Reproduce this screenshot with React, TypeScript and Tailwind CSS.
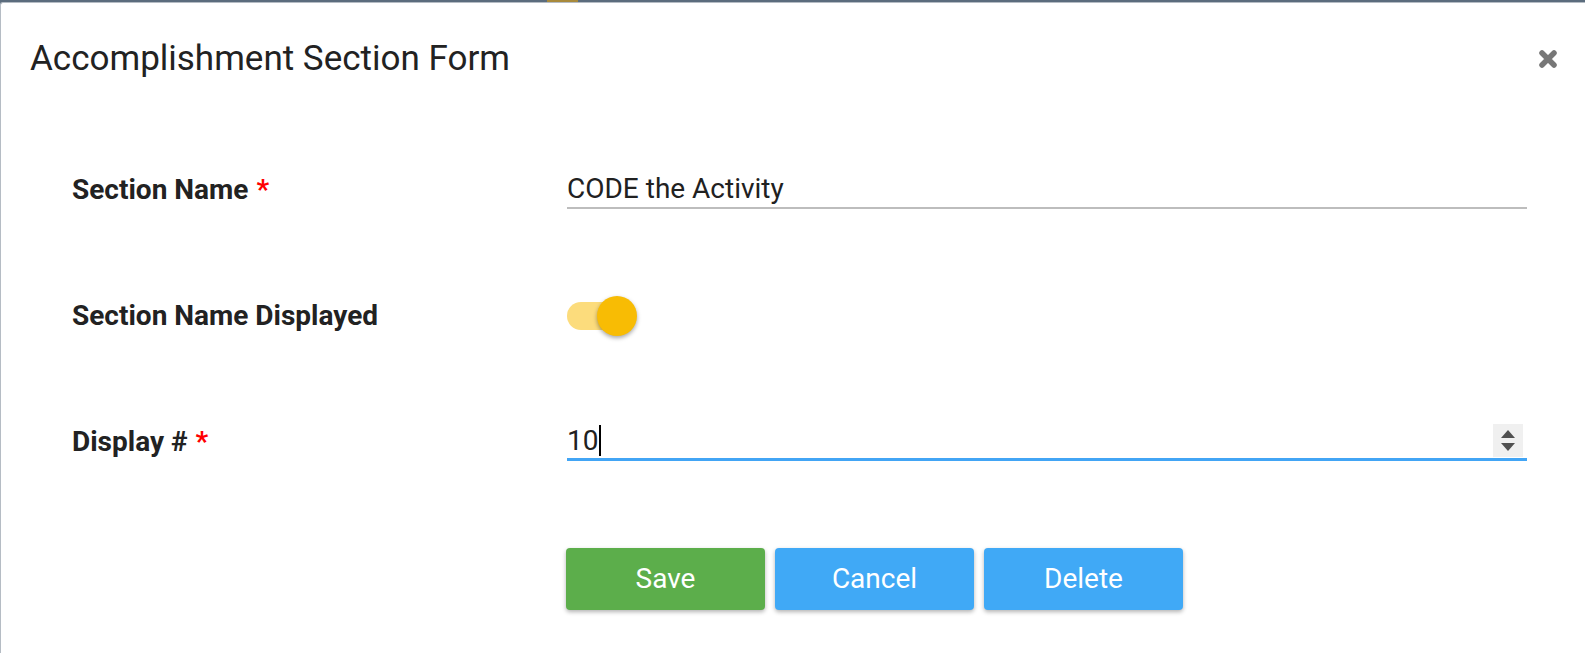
import React from 'react';

function CloseIcon() {
  return (
    <svg width="20" height="20" viewBox="0 0 20 20" aria-hidden="true">
      <path d="M4 4 L16 16 M16 4 L4 16" stroke="#777777" strokeWidth="5.5" strokeLinecap="round" />
    </svg>
  );
}

function Required() {
  return <span className="ml-[8px] text-[#ff0000]">*</span>;
}

function FormRow({ label, children }: { label: React.ReactNode; children: React.ReactNode }) {
  return (
    <div className="grid h-[126px] grid-cols-[566px_1fr] items-center">
      <div className="pl-[71px] text-[28px] font-bold text-[#222222]">{label}</div>
      <div className="pr-[58px]">{children}</div>
    </div>
  );
}

export default function App() {
  return (
    <div className="h-[653px] w-[1585px] overflow-hidden bg-[#5b6c7d] font-['Roboto','Liberation_Sans',sans-serif]">
      <div className="flex h-[2px]">
        <div className="w-[547px]" />
        <div className="w-[31px] bg-[#a88a3c]" />
      </div>
      <div className="h-[651px] rounded-tl-[3px] border-l border-t border-[#b5bcc4] bg-white">
        <div className="flex h-[108px] items-center justify-between pl-[29px] pr-[25px] pt-[4px]">
          <h2 className="text-[35px] font-normal text-[#222222]">Accomplishment Section Form</h2>
          <button className="flex h-[24px] w-[24px] items-center justify-center">
            <CloseIcon />
          </button>
        </div>

        <div className="pt-[16px]">
          <FormRow
            label={
              <>
                Section Name
                <Required />
              </>
            }
          >
            <div className="flex h-[38px] items-center border-b-2 border-[#bdbdbd] text-[28px] text-[#212121]">
              CODE the Activity
            </div>
          </FormRow>

          <FormRow label="Section Name Displayed">
            <div className="flex h-[40px] items-center">
              <div className="relative h-[40px] w-[72px]">
                <div className="absolute left-0 top-[6px] h-[28px] w-[60px] rounded-full bg-[#fcdc7c]" />
                <div className="absolute left-[30px] top-0 h-[40px] w-[40px] rounded-full bg-[#f8bc04] shadow-[0_2px_4px_rgba(0,0,0,0.35)]" />
              </div>
            </div>
          </FormRow>

          <FormRow
            label={
              <>
                Display #
                <Required />
              </>
            }
          >
            <div className="flex h-[38px] items-center justify-between border-b-[3px] border-[#42a5f5] text-[28px] text-[#212121]">
              <div className="flex items-center">
                <span>10</span>
                <span className="ml-[1px] h-[31px] w-[2px] bg-black" />
              </div>
              <div className="mr-[4px] flex h-[33px] w-[30px] flex-col items-center justify-center gap-[5px] bg-[#f0f0f0]">
                <svg width="14" height="8" viewBox="0 0 14 8" aria-hidden="true">
                  <path d="M7 0 L14 8 L0 8 Z" fill="#505050" />
                </svg>
                <svg width="14" height="8" viewBox="0 0 14 8" aria-hidden="true">
                  <path d="M0 0 L14 0 L7 8 Z" fill="#505050" />
                </svg>
              </div>
            </div>
          </FormRow>

          <div className="mt-[43px] flex gap-[10px] pl-[565px]">
            <button className="h-[62px] w-[199px] rounded-[4px] bg-[#5cae4b] text-[28px] text-white shadow-[0_2px_4px_rgba(0,0,0,0.3)]">
              Save
            </button>
            <button className="h-[62px] w-[199px] rounded-[4px] bg-[#40a9f6] text-[28px] text-white shadow-[0_2px_4px_rgba(0,0,0,0.3)]">
              Cancel
            </button>
            <button className="h-[62px] w-[199px] rounded-[4px] bg-[#40a9f6] text-[28px] text-white shadow-[0_2px_4px_rgba(0,0,0,0.3)]">
              Delete
            </button>
          </div>
        </div>
      </div>
    </div>
  );
}
